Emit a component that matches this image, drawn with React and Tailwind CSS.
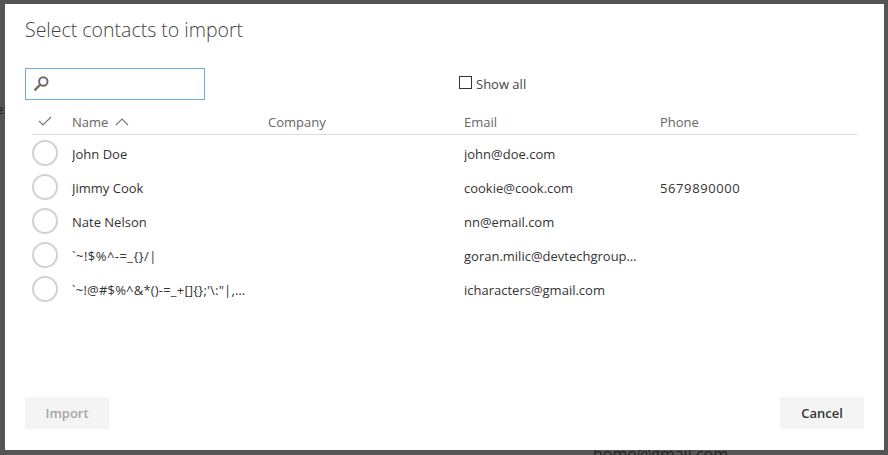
const FONT = 'font-["Open_Sans",sans-serif]';

const CONTACTS = [
  { name: 'John Doe', email: 'john@doe.com', phone: '' },
  { name: 'Jimmy Cook', email: 'cookie@cook.com', phone: '5679890000' },
  { name: 'Nate Nelson', email: 'nn@email.com', phone: '' },
  { name: '`~!$%^-=_{}/|', email: 'goran.milic@devtechgroup.com', phone: '', nameClass: 'tracking-[0.45px]' },
  { name: '`~!@#$%^&*()-=_+[]{};\'\\:"|,./<>?', email: 'icharacters@gmail.com', phone: '', nameClass: 'tracking-[0.2px]' },
];

function SearchIcon() {
  return (
    <svg width="16" height="16" viewBox="0 0 16 16" fill="none" className="shrink-0">
      <circle cx="9.3" cy="5.5" r="4.2" stroke="#6f6a66" strokeWidth="2" />
      <path d="M5.9 8.9L1.3 13.7" stroke="#7a6a5e" strokeWidth="2.4" strokeLinecap="round" />
    </svg>
  );
}

function Row({ contact }) {
  return (
    <div className="flex h-[34px] items-center pl-[27px] text-[13px] text-[#333]">
      <div className="mb-[2px] h-[26px] w-[26px] shrink-0 rounded-full border-2 border-[#d2d2d2]" />
      <div className={`ml-[14px] w-[176px] truncate pt-[2px] ${contact.nameClass || ''}`}>
        {contact.name}
      </div>
      <div className="ml-[20px] w-[176px]" />
      <div className="ml-[20px] w-[176px] truncate pt-[2px]">{contact.email}</div>
      <div className="ml-[20px] pt-[2px] tracking-[0.6px]">{contact.phone}</div>
    </div>
  );
}

export default function App() {
  return (
    <div className={`relative h-[455px] w-[888px] overflow-hidden bg-[#555555] pl-[5px] pt-[4px] ${FONT}`}>
      <div className="absolute left-[593px] top-[442px] text-[16px] text-[#222]">homo@gmail.com</div>
      <div className="absolute left-[-4px] top-[100px] text-[13px] text-[#222]">e:</div>
      <div className="relative flex h-[446px] w-[879px] flex-col bg-white">
        <h1 className="ml-[20px] mt-[11px] text-[19.5px] font-light leading-[30px] text-[#444]">
          Select contacts to import
        </h1>

        <div className="ml-[20px] mt-[23px] flex items-center">
          <div className="flex h-[32px] w-[180px] items-center border border-[#6aaae0] pl-[8px]">
            <SearchIcon />
          </div>
          <label className="ml-[254px] flex items-center text-[13px] text-[#444]">
            <span className="mb-[3px] h-[13px] w-[13px] border border-[#333]" />
            <span className="ml-[4px] pt-[2px]">Show all</span>
          </label>
        </div>

        <div className="ml-[27px] mr-[27px] mt-[6px] flex h-[29px] items-center border-b border-[#dcdcdc] pt-[6px] text-[13px] text-[#666]">
          <svg width="14" height="10" viewBox="0 0 14 10" fill="none" className="mb-[4px] ml-[6px] shrink-0">
            <path d="M1 5l4 4 8-8" stroke="#777" strokeWidth="1.1" />
          </svg>
          <div className="ml-[20px] flex w-[176px] items-center">
            Name
            <svg width="14" height="8" viewBox="0 0 14 8" fill="none" className="mb-[2px] ml-[7px]">
              <path d="M1 7l6-6 6 6" stroke="#777" strokeWidth="1.1" />
            </svg>
          </div>
          <div className="ml-[20px] w-[176px]">Company</div>
          <div className="ml-[20px] w-[176px]">Email</div>
          <div className="ml-[20px]">Phone</div>
        </div>

        <div className="mt-[2px]">
          {CONTACTS.map((c) => (
            <Row key={c.email} contact={c} />
          ))}
        </div>

        <div className="mx-[20px] mb-[21px] mt-auto flex justify-between text-[13px] font-semibold">
          <button className="h-[32px] w-[84px] bg-[#f4f4f4] pt-[2px] text-[#a6a6a6]">Import</button>
          <button className="h-[32px] w-[84px] bg-[#f4f4f4] pt-[2px] text-[#333]">Cancel</button>
        </div>
      </div>
    </div>
  );
}
